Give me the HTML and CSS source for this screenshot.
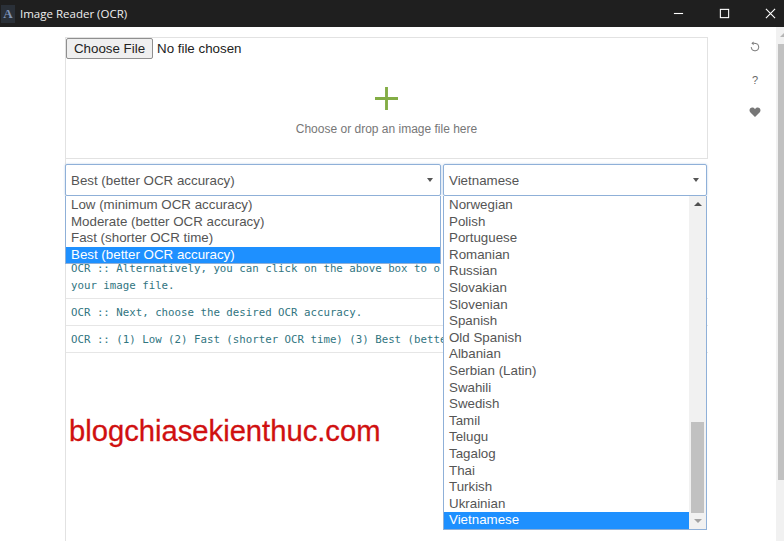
FILE: index.html
```html
<!DOCTYPE html>
<html lang="en">
<head>
    <meta charset="UTF-8">
    <meta name="viewport" content="width=device-width, initial-scale=1.0">
    <title>Image Reader (OCR)</title>
    <link rel="stylesheet" href="styles.css">
</head>
<body>
    <header class="titlebar">
        <div class="app-icon">A</div>
        <div class="app-title">Image Reader (OCR)</div>
        <div class="win-buttons">
            <svg class="win-btn" viewBox="0 0 12 12"><path d="M1 6h10" stroke="#fff" stroke-width="1.2"/></svg>
            <svg class="win-btn" viewBox="0 0 12 12"><rect x="1.5" y="1.5" width="9" height="9" fill="none" stroke="#fff" stroke-width="1.2"/></svg>
            <svg class="win-btn" viewBox="0 0 12 12"><path d="M1 1l10 10M11 1L1 11" stroke="#fff" stroke-width="1.2"/></svg>
        </div>
    </header>

    <div class="content">
        <main class="main">
            <section class="drop-box">
                <div class="file-row">
                    <button class="file-button">Choose File</button>
                    <span class="file-label">No file chosen</span>
                </div>
                <svg class="plus" viewBox="0 0 24 24"><path d="M12 0v24M0 12h24" stroke="#83ad45" stroke-width="3"/></svg>
                <div class="drop-text">Choose or drop an image file here</div>
            </section>

            <div class="select-row">
                <div class="select select-accuracy">
                    <div class="select-box">
                        <span>Best (better OCR accuracy)</span>
                        <i class="caret"></i>
                    </div>
                    <ul class="select-list">
                        <li>Low (minimum OCR accuracy)</li>
                        <li>Moderate (better OCR accuracy)</li>
                        <li>Fast (shorter OCR time)</li>
                        <li class="active">Best (better OCR accuracy)</li>
                    </ul>
                </div>
                <div class="select select-language">
                    <div class="select-box">
                        <span>Vietnamese</span>
                        <i class="caret"></i>
                    </div>
                    <div class="select-list lang-list">
                        <ul>
                            <li>Norwegian</li>
                            <li>Polish</li>
                            <li>Portuguese</li>
                            <li>Romanian</li>
                            <li>Russian</li>
                            <li>Slovakian</li>
                            <li>Slovenian</li>
                            <li>Spanish</li>
                            <li>Old Spanish</li>
                            <li>Albanian</li>
                            <li>Serbian (Latin)</li>
                            <li>Swahili</li>
                            <li>Swedish</li>
                            <li>Tamil</li>
                            <li>Telugu</li>
                            <li>Tagalog</li>
                            <li>Thai</li>
                            <li>Turkish</li>
                            <li>Ukrainian</li>
                            <li class="active">Vietnamese</li>
                        </ul>
                        <div class="scrollbar">
                            <i class="arrow-up"></i>
                            <div class="scroll-track"><div class="scroll-thumb"></div></div>
                            <i class="arrow-down"></i>
                        </div>
                    </div>
                </div>
            </div>

            <section class="log">
                <div class="log-row log-first">OCR :: Alternatively, you can click on the above box to o<br>your image file.</div>
                <div class="log-row">OCR :: Next, choose the desired OCR accuracy.</div>
                <div class="log-row">OCR :: (1) Low (2) Fast (shorter OCR time) (3) Best (bette</div>
            </section>

            <div class="watermark">blogchiasekienthuc.com</div>
        </main>

        <aside class="side-tools">
            <svg class="tool" viewBox="0 0 12 12"><path d="M4.500 2.300H6A3.800 3.800 0 1 1 2.200 6.100" fill="none" stroke="#777" stroke-width="1"/><path d="M4.600 0.400v3.800L2.400 2.300z" fill="#777"/></svg>
            <span class="tool-help">?</span>
            <svg class="tool" viewBox="0 0 12 12"><path d="M6 11L1.200 6.200C-.4 4.200 1 1.500 3.300 1.500 4.500 1.500 5.500 2.200 6 3.200 6.500 2.200 7.500 1.500 8.700 1.500 11 1.500 12.400 4.200 10.800 6.200z" fill="#777"/></svg>
        </aside>

        <div class="page-scrollbar">
            <i class="page-arrow"></i>
            <div class="page-thumb"></div>
        </div>
    </div>
</body>
</html>
```

FILE: styles.css
```css
* {
    box-sizing: border-box;
}
html, body {
    height: 100%;
}
body {
    margin: 0;
    overflow: hidden;
    background-color: #fff;
    font-family: "Liberation Sans", Arial, sans-serif;
    color: #555;
}
ul {
    list-style: none;
    margin: 0;
    padding: 0;
}

/* title bar */
.titlebar {
    display: flex;
    align-items: center;
    height: 27px;
    background-color: #1f1f1f;
    color: #eee;
}
.app-icon {
    width: 14px;
    height: 18px;
    margin-left: 1px;
    background-color: #2a3038;
    color: #7f93b5;
    font-family: "Liberation Serif", serif;
    font-size: 13px;
    font-weight: bold;
    line-height: 18px;
    text-align: center;
}
.app-title {
    margin-left: 5px;
    font-family: "Open Sans", sans-serif;
    font-size: 11.5px;
}
.win-buttons {
    display: flex;
    align-items: center;
    gap: 35px;
    margin-left: auto;
    padding-right: 8px;
}
.win-btn {
    width: 11px;
    height: 11px;
}

/* page */
.content {
    display: flex;
    height: calc(100% - 27px);
    padding-left: 65px;
}
.main {
    position: relative;
    width: 643px;
    margin-top: 10px;
    border-left: 1px solid #e2e2e2;
}
.side-tools {
    display: flex;
    flex-direction: column;
    align-items: center;
    gap: 20.5px;
    width: 12px;
    margin-left: 41px;
    padding-top: 14px;
}
.tool {
    width: 12px;
    height: 12px;
}
.tool-help {
    height: 12px;
    color: #666;
    font-size: 11px;
    line-height: 12px;
}

/* window scrollbar, cut by the right edge */
.page-scrollbar {
    width: 8px;
    margin-left: auto;
    overflow: hidden;
    background-color: #f1f1f1;
}
.page-arrow {
    display: block;
    width: 0;
    height: 0;
    margin: 6px 0 0 4px;
    border-left: 4px solid transparent;
    border-right: 4px solid transparent;
    border-bottom: 4px solid #b5b5b5;
}
.page-thumb {
    width: 6px;
    height: 436px;
    margin: 7px 0 0 2px;
    background-color: #c1c1c1;
}

/* file drop box */
.drop-box {
    display: flex;
    flex-direction: column;
    align-items: center;
    height: 122px;
    border: 1px solid #e2e2e2;
    border-left: 0;
}
.file-row {
    display: flex;
    align-items: center;
    align-self: flex-start;
    height: 21px;
    color: #222;
    font-size: 13.33px;
}
.file-button {
    width: 87px;
    height: 21px;
    padding: 0;
    background-color: #efefef;
    border: 1px solid #8f8f8f;
    border-radius: 2px;
    color: #222;
    font-family: inherit;
    font-size: 13.33px;
}
.file-label {
    margin-left: 4px;
}
.plus {
    width: 23px;
    height: 23px;
    margin-top: 28px;
}
.drop-text {
    margin-top: 12px;
    color: #777;
    font-size: 12px;
}

/* selects */
.select-row {
    display: flex;
    gap: 2px;
    margin-top: 5px;
    margin-left: -1px;
}
.select {
    position: relative;
}
.select-accuracy {
    width: 376px;
}
.select-language {
    width: 264px;
}
.select-box {
    display: flex;
    align-items: center;
    justify-content: space-between;
    height: 32px;
    padding: 0 7px 0 5px;
    border: 1px solid #8fb0d8;
    border-radius: 2px;
    box-shadow: 0 0 2px rgba(100, 150, 210, 0.5);
    font-size: 13.33px;
}
.caret {
    width: 0;
    height: 0;
    border-left: 3.5px solid transparent;
    border-right: 3.5px solid transparent;
    border-top: 4px solid #555;
}
.select-list {
    position: absolute;
    top: 32px;
    left: 0;
    width: 100%;
    padding-top: 1px;
    background-color: #fff;
    border: 1px solid #8fb0d8;
    border-top: 0;
    font-size: 13.33px;
    z-index: 2;
}
.select-list li {
    height: 16.6px;
    padding-left: 5px;
    line-height: 16.6px;
    white-space: nowrap;
}
.select-list .active {
    background-color: #1e90ff;
    color: #fff;
}
.lang-list {
    display: flex;
    padding-top: 0;
}
.lang-list ul {
    flex: 1;
    padding-top: 1px;
}

/* list scrollbar */
.scrollbar {
    display: flex;
    flex-direction: column;
    align-items: center;
    width: 17px;
    background-color: #f1f1f1;
}
.scroll-track {
    flex: 1;
    display: flex;
    align-items: flex-end;
    width: 100%;
    padding: 0 2px;
}
.scroll-thumb {
    width: 100%;
    height: 91px;
    background-color: #c1c1c1;
}
.arrow-up, .arrow-down {
    width: 0;
    height: 0;
    margin: 6px 0;
    border-left: 4px solid transparent;
    border-right: 4px solid transparent;
}
.arrow-up {
    border-bottom: 4px solid #505050;
}
.arrow-down {
    border-top: 4px solid #a3a3a3;
}

/* log */
.log {
    width: 642px;
    padding-top: 64px;
    font-family: "DejaVu Sans Mono", monospace;
    font-size: 10.75px;
    color: #31757f;
    white-space: nowrap;
}
.log-row {
    height: 27px;
    padding: 5px;
    border-bottom: 1px solid #e6e6e6;
    line-height: 17px;
}
.log-first {
    height: 39px;
    padding-top: 0;
}

.watermark {
    position: absolute;
    top: 378px;
    left: 3px;
    color: #d01010;
    font-size: 29.2px;
    line-height: 32px;
    -webkit-text-stroke: 0.3px #d01010;
    z-index: 3;
}
```
